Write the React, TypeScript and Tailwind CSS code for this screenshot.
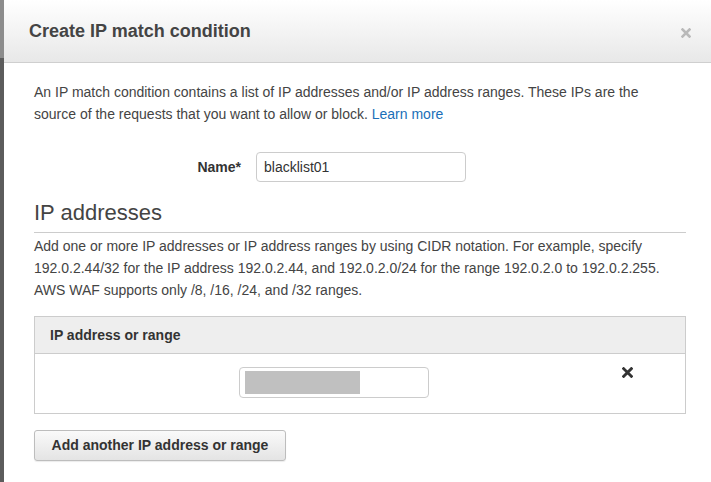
import React from 'react';

const CloseIcon = ({ className }: { className: string }) => (
    <svg viewBox="0 0 10 10" className={className}>
        <path d="M1.5 1.5 L8.5 8.5 M8.5 1.5 L1.5 8.5" stroke="currentColor" strokeWidth="2.6" strokeLinecap="square" />
    </svg>
);

const App: React.FC = () => {
    return (
        <div className="flex h-[482px] w-[711px] overflow-hidden bg-[#5a5a5a] font-['Liberation_Sans',Arial,sans-serif] text-[#444]">
            {/* page behind the modal */}
            <div className="flex w-[4px] shrink-0 flex-col">
                <div className="h-[58px] bg-[#8c8c8c]" />
                <div className="flex-1 bg-[#5c5c5c]" />
            </div>

            <div className="flex flex-1 flex-col bg-white">
                <div className="flex h-[63px] shrink-0 items-center justify-between border-b border-[#cfcfcf] bg-gradient-to-b from-white to-[#e8e8e8] pl-[25px] pr-[20px]">
                    <h2 className="text-[18px] font-bold text-[#444]">Create IP match condition</h2>
                    <CloseIcon className="mt-[3px] h-[10px] w-[10px] text-[#b9b9b9]" />
                </div>

                <div className="pl-[30px] pr-[25px] pt-[18px]">
                    <p className="max-w-[630px] text-[14px] leading-[22px]">
                        An IP match condition contains a list of IP addresses and/or IP address ranges. These IPs are the source of the requests that you want to allow or block. <span className="text-[#1a6fb8]">Learn more</span>
                    </p>

                    <div className="mt-[27px] flex items-center">
                        <span className="w-[207px] text-right text-[14px] font-bold text-[#333]">Name*</span>
                        <div className="ml-[15px] flex h-[30px] w-[210px] items-center rounded-[4px] border border-[#ccc] px-[7px] text-[14px] text-[#333]">
                            blacklist01
                        </div>
                    </div>

                    <h3 className="mt-[18px] border-b border-[#ccc] pb-[6px] text-[22px] leading-[26px] font-normal text-[#444]">IP addresses</h3>

                    <p className="mt-[2px] text-[14px] leading-[22px]">
                        Add one or more IP addresses or IP address ranges by using CIDR notation. For example, specify 192.0.2.44/32 for the IP address 192.0.2.44, and 192.0.2.0/24 for the range 192.0.2.0 to 192.0.2.255. AWS WAF supports only /8, /16, /24, and /32 ranges.
                    </p>

                    <div className="mt-[15px] border border-[#ccc]">
                        <div className="flex h-[37px] items-center border-b border-[#ccc] bg-[#eee] pl-[15px] text-[14px] font-bold text-[#333]">
                            IP address or range
                        </div>
                        <div className="flex h-[59px] items-start pl-[204px] pt-[13px]">
                            <div className="flex h-[31px] w-[190px] items-center rounded-[4px] border border-[#ccc] px-[5px]">
                                <div className="h-[23px] w-[115px] bg-[#c0c0c0]" />
                            </div>
                            <CloseIcon className="ml-[193px] h-[11px] w-[11px] text-[#333]" />
                        </div>
                    </div>

                    <button className="mt-[16px] flex h-[31px] w-[252px] items-center justify-center rounded-[3px] border border-[#bdbdbd] bg-gradient-to-b from-[#fafafa] to-[#e4e4e4] text-[14px] font-bold text-[#333] shadow-[0_1px_1px_rgba(0,0,0,0.08)]">
                        Add another IP address or range
                    </button>
                </div>
            </div>
        </div>
    );
};

export default App;
